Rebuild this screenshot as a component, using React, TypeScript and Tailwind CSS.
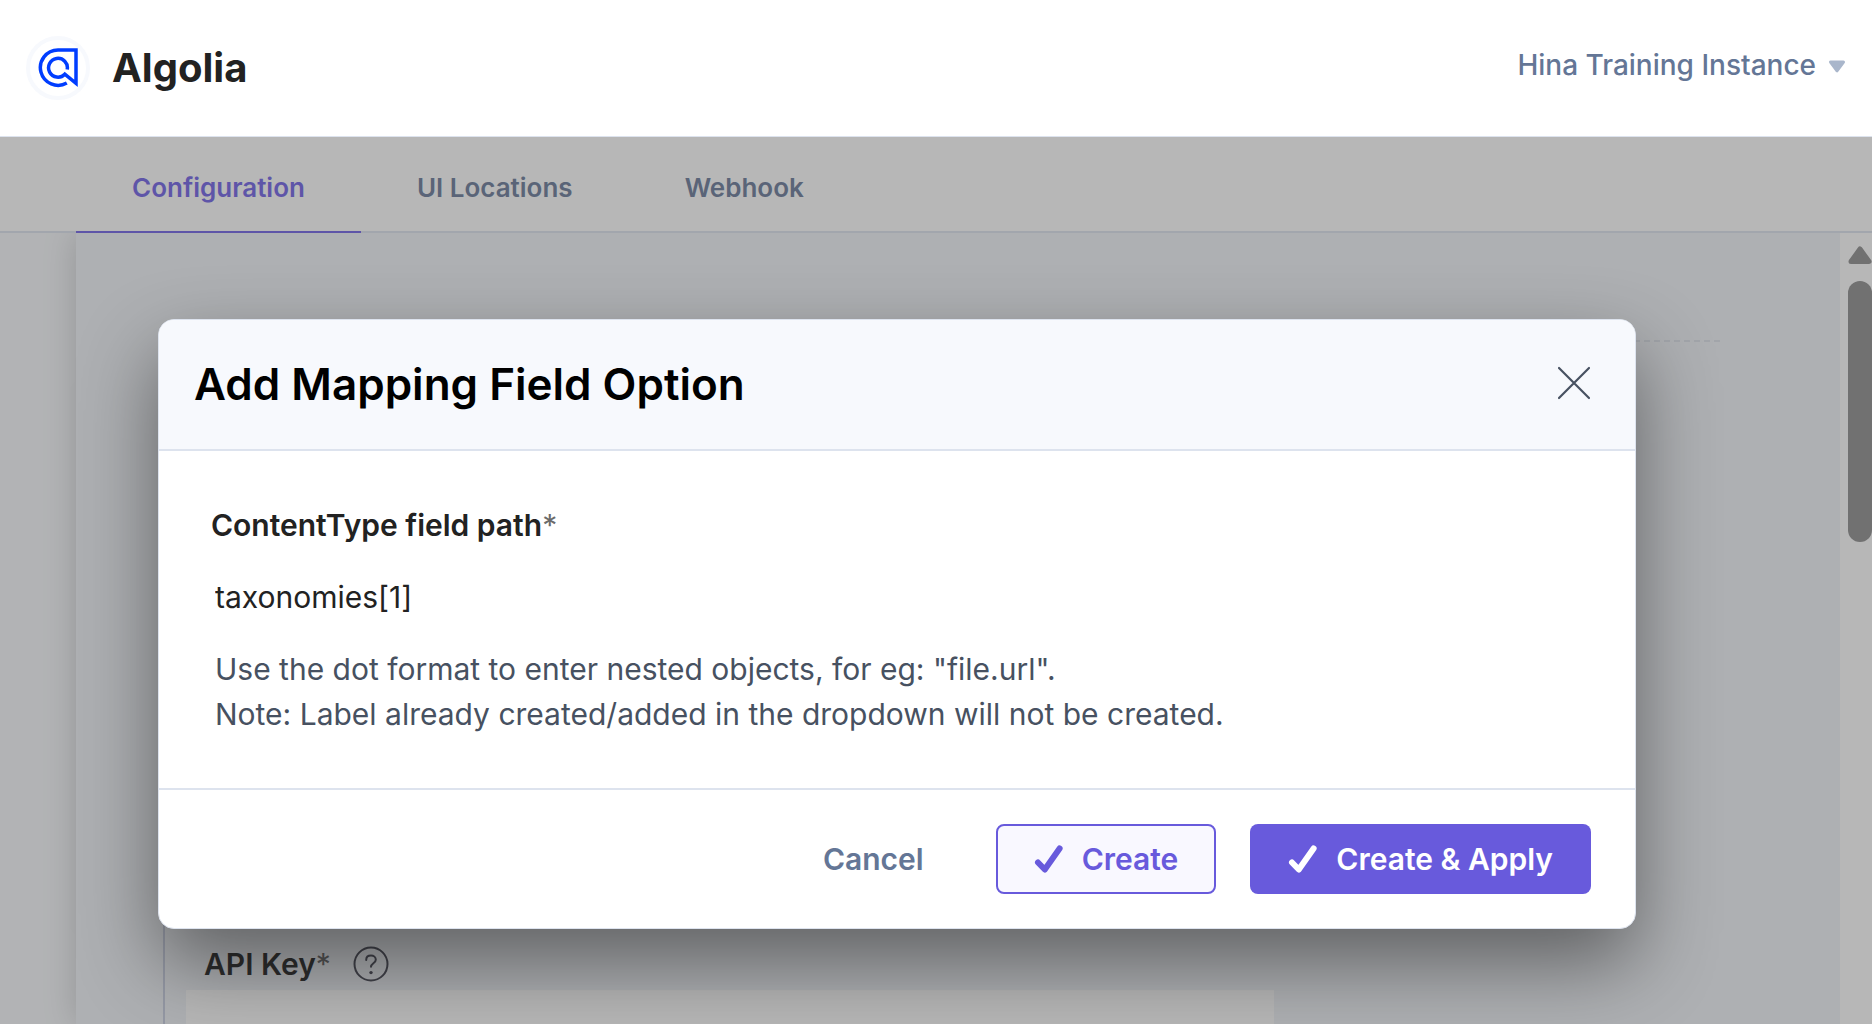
import { useState } from 'react';

const TABS = ['Configuration', 'UI Locations', 'Webhook'];

function AlgoliaLogo() {
  return (
    <span className="flex size-16 items-center justify-center rounded-full border-4 border-[#f7f9fd]">
      <svg viewBox="0 0 40 40" className="size-10" fill="none" stroke="#003dff" strokeWidth="3.5">
        <path d="M28.8 35A17.7 17.7 0 1 1 20 1.9H38V35.3L26.8 26.2A9.4 9.4 0 1 1 29.2 21.5" />
      </svg>
    </span>
  );
}

function CheckIcon() {
  return (
    <svg viewBox="0 0 30 30" className="size-[30px]" fill="none" stroke="currentColor" strokeWidth="6" strokeLinecap="round" strokeLinejoin="round">
      <path d="M4 18.5L10.8 25.5L25.6 4.5" />
    </svg>
  );
}

function HelpIcon() {
  return (
    <svg viewBox="0 0 36 36" className="size-9" fill="none" stroke="#3d3f4c" strokeWidth="2" strokeLinecap="round">
      <circle cx="18" cy="18" r="16.5" />
      <path d="M13.2 14C13.2 11.2 15.2 9.6 18 9.6C20.8 9.6 22.8 11.4 22.8 13.8C22.8 17.2 18 17.4 18 20.8" />
      <circle cx="18" cy="26.6" r="1.7" fill="#3d3f4c" stroke="none" />
    </svg>
  );
}

function Header() {
  return (
    <header className="flex h-[137px] shrink-0 items-center justify-between border-b border-[#dde3ee] bg-white px-[26px]">
      <div className="flex items-center gap-[22px]">
        <AlgoliaLogo />
        <h1 className="text-[40px] leading-12 font-bold text-[#222222]">Algolia</h1>
      </div>
      <button className="flex items-center gap-3 pb-1.5 text-[28px] leading-9 font-medium text-[#647696]">
        Hina Training Instance
        <svg viewBox="0 0 18 14" className="mt-1 h-3.5 w-[18px]">
          <path d="M2.5 2H15.5L9 10.8Z" fill="#a9b6cb" stroke="#a9b6cb" strokeWidth="3" strokeLinejoin="round" />
        </svg>
      </button>
    </header>
  );
}

function Tabs() {
  const [active, setActive] = useState('Configuration');

  return (
    <nav className="flex h-24 shrink-0 border-b-2 border-[#dde3ee] bg-white pl-[76px]">
      {TABS.map((tab) => (
        <button
          key={tab}
          onClick={() => setActive(tab)}
          className={
            tab === active
              ? 'h-24 border-b-2 border-[#6c5ce7] px-14 pt-1.5 text-[26px] font-semibold text-[#6c5ce7]'
              : 'h-24 border-b-2 border-transparent px-14 pt-1.5 text-[26px] font-semibold text-[#647696]'
          }
        >
          {tab}
        </button>
      ))}
    </nav>
  );
}

function ConfigPanel() {
  return (
    <div className="flex flex-1 overflow-hidden bg-[#f7f9fc] pl-[76px]">
      <div className="flex flex-1 flex-col bg-[#f1f3f9] shadow-[0_0_32px_rgba(0,0,0,0.2)]">
        <div className="mr-[120px] ml-[88px] h-[109px] border-b-2 border-dashed border-[#dde1ea]" />
        <div className="ml-[87px] flex flex-1 flex-col justify-end border-l-2 border-[#c5cce0] pl-[21px]">
          <div className="flex items-center gap-[22px] pl-[18px]">
            <label htmlFor="api-key" className="text-[30px] leading-9 font-semibold text-[#1b1b1b]">
              API Key<span className="font-normal text-[#5d5d5d]">*</span>
            </label>
            <button aria-label="API Key help">
              <HelpIcon />
            </button>
          </div>
          <input id="api-key" className="mt-2 h-[34px] w-[1088px] bg-white outline-none" />
        </div>
      </div>
      <div className="flex w-8 flex-col gap-4 overflow-hidden bg-white pt-3 pl-2">
        <svg viewBox="0 0 24 20" className="h-5 w-6 shrink-0">
          <path d="M12 4L21 16.5H3Z" fill="#8a8a8a" stroke="#8a8a8a" strokeWidth="5" strokeLinejoin="round" />
        </svg>
        <div className="h-[261px] w-6 shrink-0 rounded-full bg-[#8a8a8a]" />
      </div>
    </div>
  );
}

function MappingModal() {
  const [path, setPath] = useState('taxonomies[1]');

  return (
    <div role="dialog" aria-labelledby="modal-title" className="w-full overflow-hidden rounded-2xl border border-[#dde3ee] bg-white shadow-[0_34px_80px_rgba(0,0,0,0.45)]">
      <div className="flex h-[131px] items-center justify-between border-b-2 border-[#dde3ee] bg-[#f7f9fd] pr-11 pb-0.5 pl-[35px]">
        <h2 id="modal-title" className="text-[44px] leading-[52px] font-semibold text-black">
          Add Mapping Field Option
        </h2>
        <button aria-label="Close" className="pb-0.5">
          <svg viewBox="0 0 34 34" className="size-[34px]" fill="none" stroke="#475161" strokeWidth="2.2" strokeLinecap="round">
            <path d="M2 2L32 32M32 2L2 32" />
          </svg>
        </button>
      </div>

      <div className="flex flex-col px-[52px] pt-[52px] pb-[51px]">
        <label htmlFor="field-path" className="text-[30px] leading-[45px] font-semibold text-[#222222]">
          ContentType field path<span className="font-normal text-[#6b6b6b]">*</span>
        </label>
        <input
          id="field-path"
          value={path}
          onChange={(e) => setPath(e.target.value)}
          className="mt-[27px] h-[45px] pl-1 text-[30px] text-[#222222] outline-none"
        />
        <p className="mt-[27px] pl-1 text-[30px] leading-[45px] text-[#475161]">
          Use the dot format to enter nested objects, for eg: "file.url".
          <br />
          Note: Label already created/added in the dropdown will not be created.
        </p>
      </div>

      <div className="flex items-center justify-end border-t-2 border-[#dde3ee] py-[34px] pr-11 text-[30px] font-semibold">
        <button className="px-9 text-[#647696]">Cancel</button>
        <button className="ml-9 flex h-[70px] items-center gap-[18px] rounded-lg border-2 border-[#685adc] bg-[#f9f8ff] px-9 text-[#685adc]">
          <CheckIcon />
          Create
        </button>
        <button className="ml-[34px] flex h-[70px] items-center gap-[18px] rounded-lg bg-[#685adc] px-[38px] text-white">
          <CheckIcon />
          Create &amp; Apply
        </button>
      </div>
    </div>
  );
}

function App() {
  return (
    <div className="flex h-screen flex-col overflow-hidden bg-white font-['Inter',sans-serif]">
      <Header />
      <main className="relative flex flex-1 flex-col overflow-hidden">
        <Tabs />
        <ConfigPanel />
        <div className="absolute inset-0 bg-[#4b4b4b]/40 pt-[182px] pr-[236px] pl-[158px]">
          <MappingModal />
        </div>
      </main>
    </div>
  );
}

export default App;
